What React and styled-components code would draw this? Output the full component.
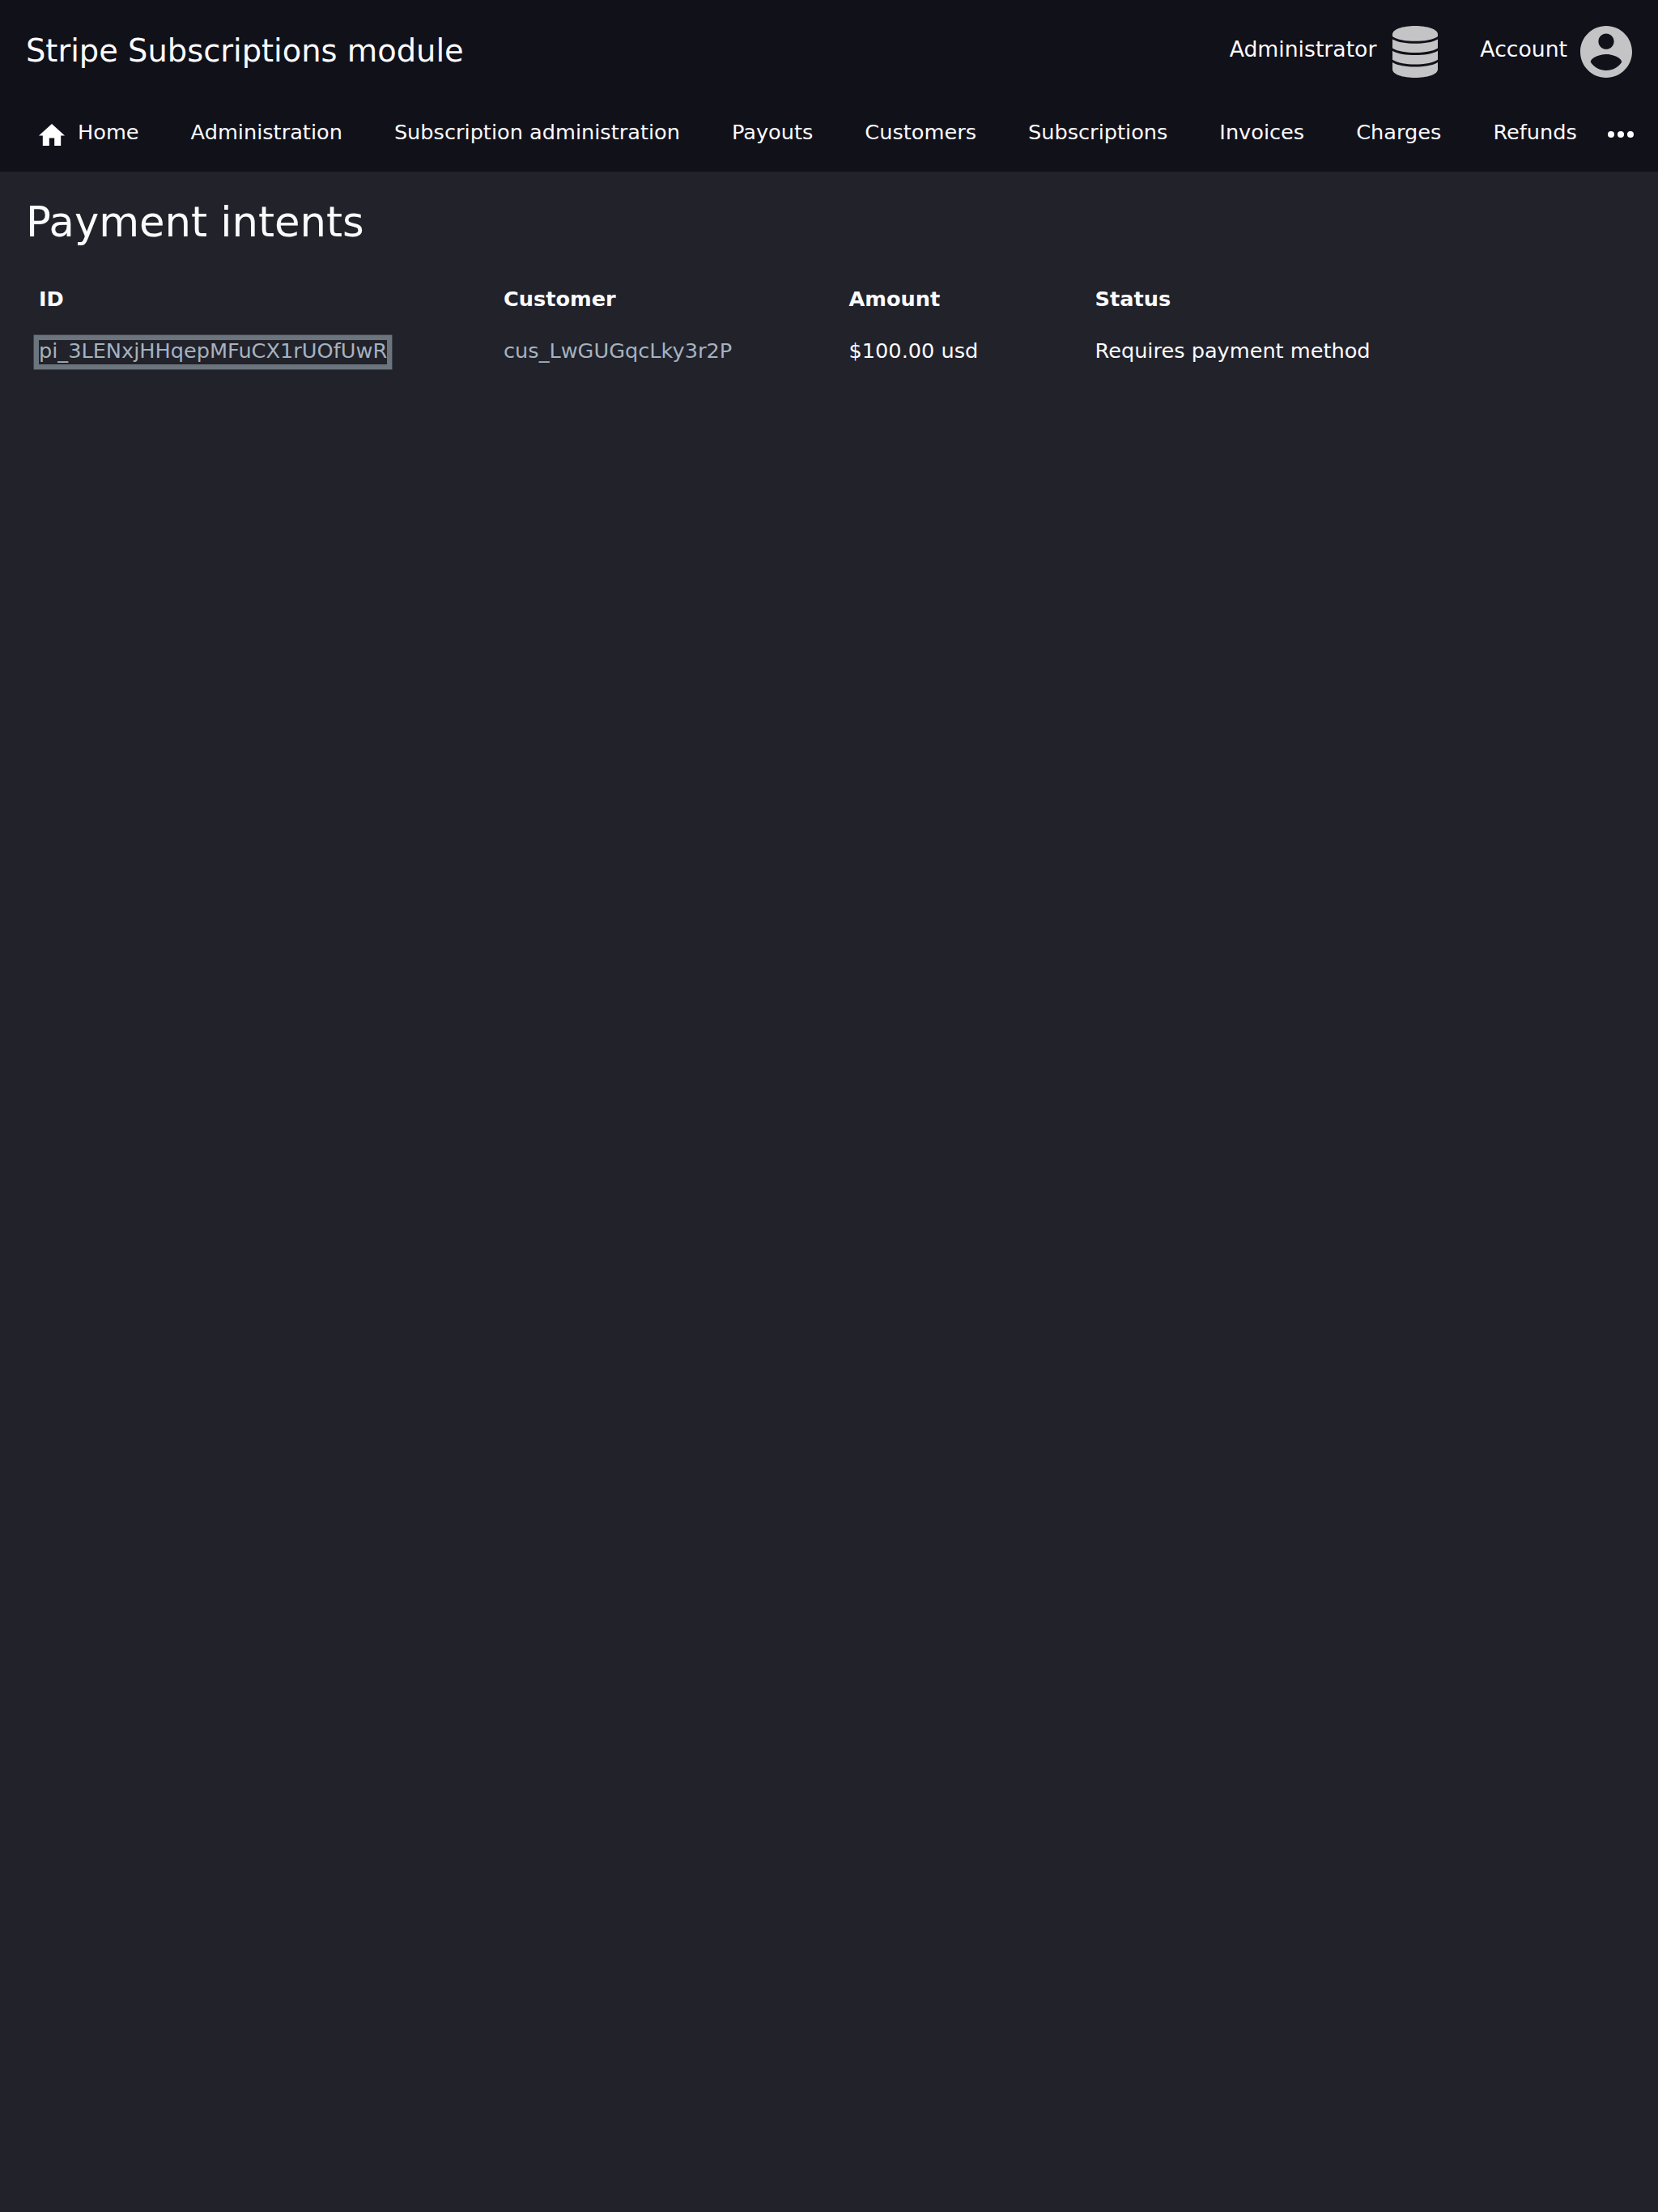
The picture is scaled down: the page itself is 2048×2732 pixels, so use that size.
import React from "react";
import styled, { createGlobalStyle } from "styled-components";

const GlobalStyle = createGlobalStyle`
  * { box-sizing: border-box; }
  body {
    margin: 0;
    min-height: 100vh;
    background: #22222a;
    color: #fbfbfe;
    font-family: "DejaVu Sans", Verdana, sans-serif;
    font-size: 25.6px;
    line-height: 30px;
  }
  a { color: inherit; text-decoration: none; }
`;

const Header = styled.header`
  height: 212px;
  background: #11111a;
`;

const TopBar = styled.div`
  display: flex;
  align-items: center;
  justify-content: space-between;
  height: 124px;
  padding: 0 32px;
`;

const Title = styled.a`
  padding-top: 2px;
  font-size: 38.4px;
  line-height: 46px;
`;

const Menus = styled.div`
  display: flex;
  gap: 48px;
  padding-top: 4px;
`;

const MenuLink = styled.a`
  display: flex;
  align-items: center;
  gap: 16px;
  height: 64px;
  font-size: 26.667px;
  line-height: 31px;
`;

const MenuLabel = styled.span`
  margin-top: -7px;
`;

const MenuIcon = styled.svg`
  display: block;
  width: 64px;
  height: 64px;
  fill: #c4c4c6;
`;

const Nav = styled.nav`
  display: flex;
  align-items: center;
  justify-content: space-between;
  height: 80px;
  padding: 0 30px 0 48px;
`;

const NavList = styled.div`
  display: flex;
  align-items: flex-start;
  gap: 64px;
  height: 32px;
`;

const NavLink = styled.a`
  display: flex;
  gap: 16px;
  white-space: nowrap;
`;

const HomeIcon = styled.svg`
  display: block;
  width: 32px;
  height: 27.2px;
  margin-top: 4.6px;
  fill: #fff;
`;

const MoreIcon = styled.svg`
  display: block;
  width: 32px;
  height: 10px;
  margin-top: 4px;
  fill: #fff;
`;

const Main = styled.main`
  padding: 32px;
`;

const Heading = styled.h1`
  margin: 0;
  font-size: 51.2px;
  font-weight: 400;
  line-height: 60px;
`;

const Table = styled.div`
  display: grid;
  grid-template-columns: 574px 426.5px 304px 1fr;
  row-gap: 34px;
  padding: 50px 16px 0;
`;

const HeadCell = styled.div`
  font-weight: 700;
`;

const Cell = styled.div``;

const CellLink = styled.a`
  && { color: #a4b3c1; }
  display: inline-block;
  padding-bottom: 4px;
  line-height: 26px;
  box-shadow: ${({ $focused }) => ($focused ? "0 0 0 6.4px #6c757d" : "none")};
`;

const navItems = [
  "Administration",
  "Subscription administration",
  "Payouts",
  "Customers",
  "Subscriptions",
  "Invoices",
  "Charges",
  "Refunds",
];

const columns = ["ID", "Customer", "Amount", "Status"];

export default function App() {
  return (
    <>
      <GlobalStyle />
      <Header>
        <TopBar>
          <Title href="#">Stripe Subscriptions module</Title>
          <Menus>
            <MenuLink href="#">
              <MenuLabel>Administrator</MenuLabel>
              <MenuIcon viewBox="-4 0 64 64">
                <path d="M0 10.500C0 4 13 0 28 0S56 4 56 10.500V13C50 17.500 39 18.800 28 18.800S6 17.500 0 13z" />
                <path d="M0 16.500C7 20.500 17 21.700 28 21.700S49 20.500 56 16.500V27.500C49 31.700 39 33 28 33S7 31.700 0 27.500z" />
                <path d="M0 30.700C7 34.700 17 36 28 36S49 34.700 56 30.700V41.800C49 46 39 47.500 28 47.500S7 46 0 41.800z" />
                <path d="M0 45C7 49.200 17 50.500 28 50.500S49 49.200 56 45V53.500C56 60 43 64 28 64S0 60 0 53.500z" />
              </MenuIcon>
            </MenuLink>
            <MenuLink href="#">
              <MenuLabel>Account</MenuLabel>
              <MenuIcon viewBox="2 2 20 20">
                <path d="M12 2C6.48 2 2 6.48 2 12s4.48 10 10 10 10-4.480 10-10S17.520 2 12 2zm0 3c1.660 0 3 1.340 3 3s-1.340 3-3 3-3-1.340-3-3 1.340-3 3-3zm0 14.200c-2.500 0-4.710-1.280-6-3.220.03-1.990 4-3.080 6-3.080 1.990 0 5.970 1.090 6 3.080-1.290 1.940-3.500 3.220-6 3.220z" />
              </MenuIcon>
            </MenuLink>
          </Menus>
        </TopBar>
        <Nav>
          <NavList>
            <NavLink href="#">
              <HomeIcon viewBox="2 3 20 17">
                <path d="M10 20v-6h4v6h5v-8h3L12 3 2 12h3v8z" />
              </HomeIcon>
              Home
            </NavLink>
            {navItems.map((item) => (
              <NavLink href="#" key={item}>{item}</NavLink>
            ))}
          </NavList>
          <MoreIcon viewBox="0 0 32 10">
            <circle cx="4" cy="5" r="4" />
            <circle cx="16" cy="5" r="4" />
            <circle cx="28" cy="5" r="4" />
          </MoreIcon>
        </Nav>
      </Header>
      <Main>
        <Heading>Payment intents</Heading>
        <Table>
          {columns.map((column) => (
            <HeadCell key={column}>{column}</HeadCell>
          ))}
          <Cell><CellLink href="#" $focused>pi_3LENxjHHqepMFuCX1rUOfUwR</CellLink></Cell>
          <Cell><CellLink href="#">cus_LwGUGqcLky3r2P</CellLink></Cell>
          <Cell>$100.00 usd</Cell>
          <Cell>Requires payment method</Cell>
        </Table>
      </Main>
    </>
  );
}
